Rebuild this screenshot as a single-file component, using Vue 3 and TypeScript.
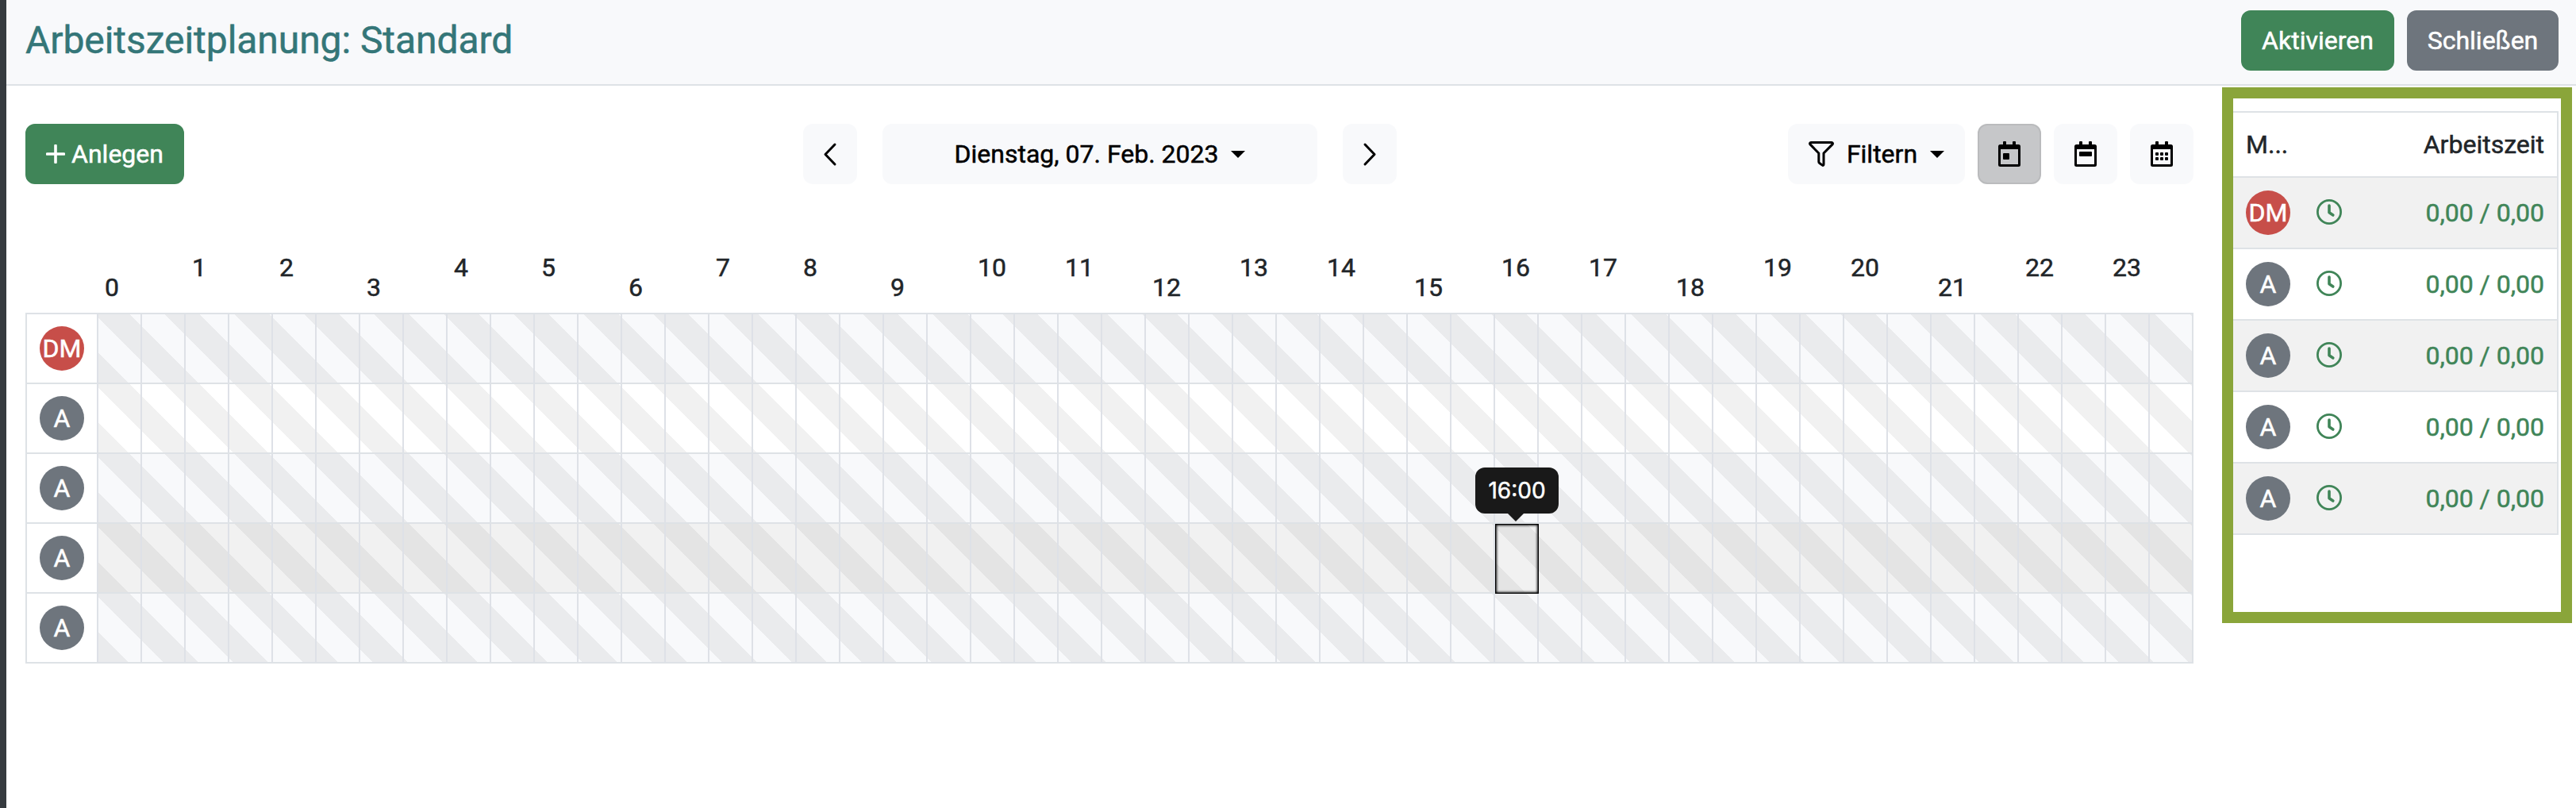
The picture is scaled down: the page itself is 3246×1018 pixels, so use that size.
<script setup lang="ts">
interface Employee {
  initials: string
  red?: boolean
  hover?: boolean
}

const employees: Employee[] = [
  { initials: 'DM', red: true },
  { initials: 'A' },
  { initials: 'A' },
  { initials: 'A', hover: true },
  { initials: 'A' },
]
const hours = Array.from({ length: 24 }, (_, h) => h)
const slots = Array.from({ length: 48 }, (_, s) => s)
const activeSlot = 32
const views = ['day', 'week', 'month']
</script>

<template>
  <div class="app">
    <header class="topbar">
      <h1>Arbeitszeitplanung: Standard</h1>
      <div class="actions">
        <button class="btn green activate">Aktivieren</button>
        <button class="btn gray close">Schließen</button>
      </div>
    </header>

    <div class="body">
      <main>
        <div class="toolbar">
          <button class="btn green create">
            <svg width="24" height="24" viewBox="0 0 24 24"><path d="M12 1.500v21M1.500 12h21" stroke="currentColor" stroke-width="3.600" stroke-linecap="round" /></svg>
            <span>Anlegen</span>
          </button>
          <div class="dates">
            <button class="btn light nav">
              <svg width="32" height="32" viewBox="0 0 32 32"><path d="M22 4 10 16.500l12 12.500" /></svg>
            </button>
            <button class="btn light date">Dienstag, 07. Feb. 2023<i class="caret"></i></button>
            <button class="btn light nav">
              <svg width="32" height="32" viewBox="0 0 32 32"><path d="m10 4 12 12.500-12 12.500" /></svg>
            </button>
          </div>
          <div class="views">
            <button class="btn light filter">
              <svg width="32" height="32" viewBox="0 0 32 32"><path d="M3 1.500h26c1.300 0 1.900 1.400 1 2.400L19 15v14c0 1.200-.8 1.700-1.700 1.100L13.700 27.500c-.6-.4-.9-1-.9-1.700V15L2 3.900c-.9-1-.3-2.400 1-2.400Z" fill="none" stroke="currentColor" stroke-width="3" stroke-linejoin="round" /></svg>
              <span>Filtern</span><i class="caret"></i>
            </button>
            <button v-for="view in views" :key="view" class="btn light view" :class="{ active: view === 'day' }">
              <svg width="28" height="32" viewBox="0 0 28 32" fill="currentColor">
                <path fill-rule="evenodd" d="M6 1a1 1 0 0 1 1-1h2a1 1 0 0 1 1 1v3h8V1a1 1 0 0 1 1-1h2a1 1 0 0 1 1 1v3h3.500A2.500 2.500 0 0 1 28 6.500v23a2.500 2.500 0 0 1-2.500 2.500h-23A2.500 2.500 0 0 1 0 29.500v-23A2.500 2.500 0 0 1 2.500 4H6ZM3 10v19h22V10Z" />
                <rect v-if="view === 'day'" x="6" y="15" width="8" height="8" rx="1" />
                <rect v-else-if="view === 'week'" x="6" y="13" width="16" height="6" rx="1" />
                <g v-else>
                  <template v-for="y in [14, 20]" :key="y">
                    <rect v-for="x in [6, 12, 18]" :key="x" :x="x" :y="y" width="4" height="4" rx="1" />
                  </template>
                </g>
              </svg>
            </button>
          </div>
        </div>

        <div class="hours">
          <span v-for="h in hours" :key="h" :class="{ low: h % 3 === 0 }">{{ h }}</span>
        </div>

        <div class="plan">
          <div v-for="(e, r) in employees" :key="r" class="row" :class="{ odd: r % 2 === 0, hover: e.hover }">
            <div class="who"><span class="avatar" :class="{ red: e.red }">{{ e.initials }}</span></div>
            <div class="track">
              <div v-for="s in slots" :key="s" class="slot">
                <div v-if="e.hover && s === activeSlot" class="focus">
                  <div class="tip">16:00</div>
                </div>
              </div>
            </div>
          </div>
        </div>
      </main>

      <aside>
        <div class="summary">
          <div class="line head"><span>M...</span><span>Arbeitszeit</span></div>
          <div v-for="(e, r) in employees" :key="r" class="line">
            <span class="avatar" :class="{ red: e.red }">{{ e.initials }}</span>
            <svg width="32" height="32" viewBox="0 0 32 32" fill="none" stroke="currentColor" stroke-linecap="round" stroke-linejoin="round">
              <circle cx="16" cy="16" r="14.600" stroke-width="2.800" />
              <path d="M16 8v8.800l4.800 3.200" stroke-width="3.600" />
            </svg>
            <span class="time">0,00 / 0,00</span>
          </div>
        </div>
      </aside>
    </div>
  </div>
</template>

<style>
body {
  margin: 0;
  background: #fff;
}
</style>

<style scoped>
* {
  box-sizing: border-box;
}
.app {
  width: 3246px;
  height: 1018px;
  overflow: hidden;
  border-left: 8px solid #363b3f;
  background: #fff;
  font-family: Roboto, "Liberation Sans", sans-serif;
  font-size: 32px;
  line-height: 48px;
  color: #212529;
  -webkit-text-stroke: 0.5px;
}
.topbar {
  height: 108px;
  padding: 13px 22px 0 24px;
  display: flex;
  justify-content: space-between;
  background: #f8f9fb;
  border-bottom: 2px solid #dee2e6;
}
h1 {
  margin: 9px 0 0;
  font-size: 48px;
  line-height: 58px;
  font-weight: 400;
  letter-spacing: -0.06px;
  color: #347678;
}
.actions {
  display: flex;
  gap: 16px;
}
.btn {
  height: 76px;
  padding: 0;
  border: 2px solid transparent;
  border-radius: 12px;
  display: flex;
  align-items: center;
  justify-content: center;
  font: inherit;
  color: #fff;
  white-space: nowrap;
}
.activate {
  width: 193px;
}
.close {
  width: 191px;
}
.green {
  background: #408558;
  border-color: #408558;
}
.gray {
  background: #6e757d;
  border-color: #6e757d;
}
.light {
  background: #f8f9fb;
  border-color: #f8f9fb;
  color: #000;
}
.body {
  display: flex;
}
main {
  width: 2732px;
  margin-left: 24px;
  padding-top: 48px;
}
.toolbar {
  display: flex;
}
.create {
  width: 200px;
  gap: 8px;
}
.dates {
  display: flex;
  gap: 32px;
  margin-left: 780px;
}
.nav {
  width: 68px;
}
.nav path {
  fill: none;
  stroke: currentColor;
  stroke-width: 3;
  stroke-linecap: round;
  stroke-linejoin: round;
}
.date {
  width: 548px;
}
.caret {
  margin-left: 16px;
  border-top: 9.6px solid;
  border-left: 9.6px solid transparent;
  border-right: 9.6px solid transparent;
}
.views {
  display: flex;
  gap: 16px;
  margin-left: auto;
}
.filter {
  width: 223px;
}
.filter span {
  margin-left: 16px;
}
.view {
  width: 80px;
}
.active {
  background: #c6c7c9;
  border-color: #babbbd;
}
.hours {
  display: flex;
  height: 162px;
  padding: 81px 0 0 90px;
}
.hours span {
  width: 110px;
  padding-left: 10px;
}
.hours .low {
  padding-top: 25px;
}
.plan {
  border: 2px solid #dee2e6;
  border-bottom: 0;
}
.row {
  display: flex;
  height: 88px;
  border-bottom: 2px solid #dee2e6;
}
.who {
  width: 88px;
  display: flex;
  align-items: center;
  justify-content: center;
}
.avatar {
  width: 56px;
  height: 56px;
  border-radius: 50%;
  display: flex;
  align-items: center;
  justify-content: center;
  background: #6e757d;
  color: #fff;
}
.avatar.red {
  background: #c74e49;
}
.track {
  display: flex;
  --stripe: rgba(0, 0, 0, 0.055);
  background-image: linear-gradient(45deg, var(--stripe) 25%, transparent 25%, transparent 50%, var(--stripe) 50%, var(--stripe) 75%, transparent 75%);
  background-size: 88px 88px;
  background-position: -2px 0;
}
.odd .track {
  background-color: #f8f9fb;
}
.hover .track {
  background-color: #f1f1f1;
}
.slot {
  width: 55px;
  border-left: 2px solid #dee1e7;
}
.focus {
  position: relative;
  width: 55px;
  height: 88px;
  border: 1px solid #000;
  box-shadow: inset 0 0 3px 1px rgba(0, 0, 0, 0.95);
}
.tip {
  position: absolute;
  left: -26px;
  top: -72px;
  width: 105px;
  height: 58px;
  border-radius: 12px;
  background: #191919;
  color: #fff;
  font-family: Inter, sans-serif;
  font-size: 28px;
  line-height: 59px;
  text-align: center;
}
.tip::after {
  content: "";
  position: absolute;
  left: 41px;
  top: 58px;
  border-top: 10px solid #191919;
  border-left: 10px solid transparent;
  border-right: 10px solid transparent;
}
aside {
  width: 441px;
  height: 675px;
  margin: 2px 0 0 36px;
  padding-top: 16px;
  border: 14px solid #8aa53a;
}
.summary {
  width: 410px;
  border-top: 2px solid #dee2e6;
  border-right: 2px solid #dee2e6;
}
.line {
  height: 90px;
  padding: 0 16px;
  display: flex;
  align-items: center;
  border-bottom: 2px solid #dee2e6;
  color: #408558;
}
.line:nth-child(even) {
  background: #f1f1f1;
}
.head {
  height: 82px;
  justify-content: space-between;
  color: #212529;
}
.line svg {
  margin: -2px 0 0 33px;
}
.time {
  margin-left: auto;
}
</style>
